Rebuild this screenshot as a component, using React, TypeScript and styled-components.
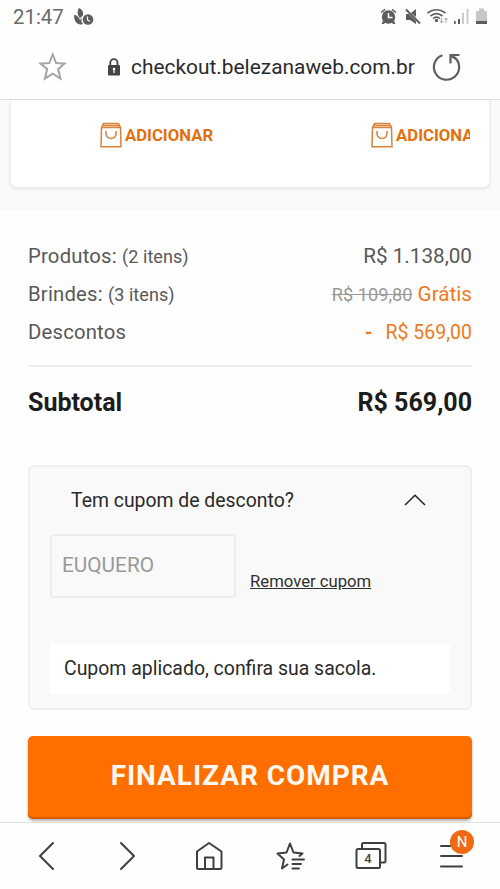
import React from "react";
import styled, { createGlobalStyle } from "styled-components";

const GlobalStyle = createGlobalStyle`
  * { box-sizing: border-box; }
  body { margin: 0; background: #fefefe; font-family: Roboto, sans-serif; }
  button { font: inherit; border: 0; background: none; padding: 0; color: inherit; display: block; }
  svg { display: block; flex: none; }
`;

const Screen = styled.div`
  width: 500px;
  height: 889px;
  display: flex;
  flex-direction: column;
  overflow: hidden;
  background: #fefefe;
  color: #222;

  > * { flex: none; }
`;

const StatusBar = styled.header`
  height: 34px;
  display: flex;
  align-items: center;
  padding: 0 12px 0 13px;
`;

const Clock = styled.time`
  font-size: 20.4px;
  line-height: 34px;
  color: #6a6a6a;
  flex: 1;
  display: flex;
  align-items: center;
  gap: 10px;
`;

const AddressBar = styled.div`
  height: 66px;
  display: flex;
  align-items: center;
  padding: 0 38px 0 38px;
  border-bottom: 1px solid #dedede;
`;

const Address = styled.div`
  display: flex;
  align-items: center;
  gap: 10px;
  margin: 0 auto 0 40px;
`;

const Url = styled.span`
  font-size: 20.9px;
  line-height: 30px;
  color: #2b2b2b;
  white-space: nowrap;
`;

const Shelf = styled.section`
  height: 110px;
  background: #fafafa;
  padding: 0 10px;
`;

const ShelfCard = styled.div`
  height: 88px;
  display: flex;
  padding: 21px 19px 0 89px;
  background: #fff;
  border: 1px solid #ececec;
  border-top: 0;
  border-radius: 0 0 6px 6px;
  box-shadow: 0 1px 3px rgba(0, 0, 0, 0.09);
  overflow: hidden;
`;

const AddTrack = styled.div`
  flex: 1;
  display: flex;
  gap: 158px;
  overflow: hidden;
`;

const AddButton = styled.button`
  height: 28px;
  display: flex;
  align-items: center;
  gap: 3px;
  flex: none;
  color: #e2700f;
  font-size: 16.7px;
  font-weight: 700;
`;

const Summary = styled.dl`
  margin: 0 28px;
  padding: 27px 0 14px;
  border-bottom: 2px solid #eeeeee;
`;

const SummaryRow = styled.div`
  height: 38px;
  display: flex;
  justify-content: space-between;
  align-items: baseline;
  line-height: 38px;
`;

const Label = styled.dt`
  font-size: 20.3px;
  letter-spacing: 0.2px;
  color: #585858;
`;

const Count = styled.span`
  font-size: 18px;
  letter-spacing: 0.05px;
`;

const Amount = styled.dd<{ $accent?: boolean }>`
  margin: 0;
  font-size: 20.7px;
  color: ${(p) => (p.$accent ? "#ec7a22" : "#585858")};
  white-space: pre;
`;

const DiscountAmount = styled(Amount)`
  display: flex;
  gap: 13px;
  font-size: 19.5px;
`;

const Minus = styled.span`
  font-weight: 700;
`;

const OldPrice = styled.s`
  font-size: 18.2px;
  color: #999;
`;

const Total = styled.div`
  height: 98px;
  margin: 0 28px;
  display: flex;
  justify-content: space-between;
  font-size: 25px;
  font-weight: 700;
  line-height: 72px;
  color: #1c1c1c;
`;

const Coupon = styled.section`
  height: 245px;
  margin: 0 28px;
  padding: 0 21px;
  background: #f9f9f9;
  border: 2px solid #efefef;
  border-radius: 6px;
`;

const CouponHeader = styled.div`
  height: 67px;
  display: flex;
  align-items: center;
  justify-content: space-between;
  padding: 0 23px 1px 20px;
  font-size: 19.4px;
  color: #2a2a2a;
`;

const CouponForm = styled.div`
  height: 64px;
  display: flex;
  align-items: flex-end;
  gap: 14px;
`;

const CodeField = styled.div`
  width: 186px;
  height: 64px;
  margin-left: -1px;
  padding-left: 10px;
  border: 2px solid #ededed;
  border-radius: 4px;
  font-size: 20.8px;
  line-height: 59px;
  color: #999;
`;

const RemoveLink = styled.a`
  font-size: 16.7px;
  line-height: 20px;
  margin-bottom: 6px;
  color: #303030;
  text-decoration: underline;
`;

const Notice = styled.p`
  height: 51px;
  margin: 45px -1px 0;
  padding-left: 14px;
  background: #fff;
  border-radius: 4px;
  font-size: 19.45px;
  line-height: 51px;
  color: #2a2a2a;
`;

const Checkout = styled.button`
  height: 83px;
  margin: 26px 28px 3px;
  padding-bottom: 3px;
  background: #ff6f00;
  border-radius: 5px;
  box-shadow: inset 0 -2px 0 #d75c00, 0 2px 3px rgba(0, 0, 0, 0.3);
  font-size: 28px;
  font-weight: 700;
  letter-spacing: 0.95px;
  line-height: 80px;
  text-align: center;
  color: #fff8f0;
`;

const BottomNav = styled.nav`
  height: 67px;
  display: grid;
  grid-template-columns: 80px 77px 81px 79px 84px 1fr;
  justify-items: start;
  align-content: start;
  padding: 18px 0 0 38px;
  background: #fefefe;
  border-top: 1px solid #e2e2e2;
  position: relative;
`;

const NavButton = styled.button`
  position: relative;
  height: 30px;
`;

const TabCount = styled.span`
  position: absolute;
  left: 1px;
  top: 9px;
  width: 24px;
  text-align: center;
  font-size: 13px;
  line-height: 17px;
  font-weight: 500;
  color: #444;
`;

const Badge = styled.span`
  position: absolute;
  left: 11px;
  top: -11px;
  width: 24px;
  height: 24px;
  border-radius: 50%;
  background: #f06a14;
  color: #fff;
  font-size: 15px;
  line-height: 24px;
  text-align: center;
`;

const LeafClockIcon = () => (
  <svg width="20" height="18" viewBox="0 0 20 18">
    <path d="M5 0C9 2 10 5 8.500 8L6 10C3 7 3 3 5 0ZM0 7C3 7 5 9 6 12L8 9C7 12 7 14 9 16C4 18 0 14 0 7Z" fill="#5e5e5e" />
    <circle cx="14" cy="11.500" r="5.300" fill="#5e5e5e" />
    <path d="M13.500 8.500V12L16 13.500" fill="none" stroke="#fff" strokeWidth="1.200" />
  </svg>
);

const StatusIcons = () => (
  <svg width="108" height="18" viewBox="0 0 108 18">
    <g fill="#5c5c5c">
      <circle cx="8.500" cy="9" r="6.700" />
      <path d="M3 13L1.500 16H4L5.500 14ZM14 13L15.500 16H13L11.500 14Z" />
      <path d="M1 4.500L5 1.300M12 1.300L16 4.500" stroke="#5c5c5c" strokeWidth="1.500" />
      <path d="M8.500 5V9.500H12.500" stroke="#fff" strokeWidth="1.500" fill="none" />
      <path d="M26 6H29L36 13V16L30 12H26ZM31 5L36 1V9Z" />
      <path d="M26 1.500L40 15.500" stroke="#5c5c5c" strokeWidth="2" />
      <circle cx="56.500" cy="12.500" r="1.700" />
      <path d="M47.500 5Q56.500 -1.500 65.500 5M50.500 8Q56.500 3.300 62.500 8M53 10.700Q56.500 7.500 60 10.700" fill="none" stroke="#5c5c5c" strokeWidth="1.600" />
      <path d="M74 13h1.700v3H74ZM78 11h2v5h-2Z" />
    </g>
    <path d="M61.500 10V15M59.800 13L61.500 15L63.200 13M66 15V10M64.300 12L66 10L67.700 12" fill="none" stroke="#aaa" />
    <path d="M82 5h2v11h-2ZM86.500 1h2v15h-2Z" fill="#ccc" />
    <path d="M96 3H99V0.500H104V3H107V16H96Z" fill="#c6c6c6" />
    <path d="M96 13H107V16H96Z" fill="#5c5c5c" />
  </svg>
);

const StarIcon = () => (
  <svg width="29" height="29" viewBox="0 0 29 29" fill="none" stroke="#a5a5a5" strokeWidth="2">
    <path d="M14.700 2.500L18.100 11L26.500 11.600L20.200 17.200L22.500 26.500L14.700 21.700L6.900 26.500L9.200 17.200L2.500 11.600L11.300 11Z" />
  </svg>
);

const LockIcon = () => (
  <svg width="14" height="18" viewBox="0 0 14 18">
    <path d="M3.300 8V4.800a3.600 3.600 0 0 1 7.200 0V8" fill="none" stroke="#444" strokeWidth="1.800" />
    <rect x="1" y="7" width="12" height="10.500" rx="1" fill="#444" />
    <circle cx="7" cy="11" r="1.300" fill="#fff" />
    <path d="M7 11V15" stroke="#fff" strokeWidth="1.200" />
  </svg>
);

const ReloadIcon = () => (
  <svg width="30" height="30" viewBox="0 0 30 30" fill="none" stroke="#606060" strokeWidth="2.200">
    <path d="M10.500 3.200A12.600 12.600 0 1 0 22 5" />
    <path d="M18.500 11.500V3H27.500M18.500 3.500L23.500 6.500" />
  </svg>
);

const BagIcon = () => (
  <svg width="22" height="26" viewBox="0 0 22 26" fill="none" stroke="#d9823b" strokeWidth="1.500">
    <path d="M1.500 5.500L3.500 1.500H18.500L20.500 5.500L21 24.700H1ZM1.500 5.500H20.500M3 3.500H19" />
    <path d="M6 9V11.500A5 5 0 0 0 16 11.500V9" />
  </svg>
);

const ChevronUp = () => (
  <svg width="22" height="12" viewBox="0 0 22 12" fill="none" stroke="#222" strokeWidth="1.500">
    <path d="M1 11L11 1.200L21 11" />
  </svg>
);

const NavSvg = styled.svg`
  fill: none;
  stroke: #3f3f3f;
  stroke-width: 2;
  stroke-linecap: round;
  stroke-linejoin: round;
`;

export default function App() {
  return (
    <Screen>
      <GlobalStyle />
      <StatusBar>
        <Clock>21:47<LeafClockIcon /></Clock>
        <StatusIcons />
      </StatusBar>
      <AddressBar>
        <StarIcon />
        <Address>
          <LockIcon />
          <Url>checkout.belezanaweb.com.br</Url>
        </Address>
        <ReloadIcon />
      </AddressBar>
      <Shelf>
        <ShelfCard>
          <AddTrack>
            <AddButton><BagIcon />ADICIONAR</AddButton>
            <AddButton><BagIcon />ADICIONAR</AddButton>
          </AddTrack>
        </ShelfCard>
      </Shelf>
      <Summary>
        <SummaryRow>
          <Label>Produtos: <Count>(2 itens)</Count></Label>
          <Amount>R$ 1.138,00</Amount>
        </SummaryRow>
        <SummaryRow>
          <Label>Brindes: <Count>(3 itens)</Count></Label>
          <Amount $accent><OldPrice>R$ 109,80</OldPrice> Grátis</Amount>
        </SummaryRow>
        <SummaryRow>
          <Label>Descontos</Label>
          <DiscountAmount $accent><Minus>-</Minus><span>R$ 569,00</span></DiscountAmount>
        </SummaryRow>
      </Summary>
      <Total><span>Subtotal</span><span>R$ 569,00</span></Total>
      <Coupon>
        <CouponHeader>Tem cupom de desconto?<ChevronUp /></CouponHeader>
        <CouponForm>
          <CodeField>EUQUERO</CodeField>
          <RemoveLink>Remover cupom</RemoveLink>
        </CouponForm>
        <Notice>Cupom aplicado, confira sua sacola.</Notice>
      </Coupon>
      <Checkout>FINALIZAR COMPRA</Checkout>
      <BottomNav>
        <NavButton>
          <NavSvg width="18" height="30" viewBox="0 0 18 30"><path d="M15 2L2 15L15 28" /></NavSvg>
        </NavButton>
        <NavButton>
          <NavSvg width="18" height="30" viewBox="0 0 18 30"><path d="M3 2L16 15L3 28" /></NavSvg>
        </NavButton>
        <NavButton>
          <NavSvg width="28" height="30" viewBox="0 0 28 30">
            <path d="M2 10.500L14 2L26.500 10.500V26.500Q26.500 28 25 28H3.500Q2 28 2 26.500ZM10 28V16.500H18.500V28" />
          </NavSvg>
        </NavButton>
        <NavButton>
          <NavSvg width="30" height="30" viewBox="0 0 30 30">
            <path d="M11.500 23.500L6 27.500L8 18.500L1.500 12.500L10.500 11.500L14 2.500L17.500 11.500L26.500 12.500L23.500 15" />
            <path d="M16.500 18.500H28M16.500 23H25M16.500 27.500H23" />
          </NavSvg>
        </NavButton>
        <NavButton>
          <NavSvg width="32" height="30" viewBox="0 0 32 30">
            <rect x="1.500" y="8" width="23.500" height="19" rx="1.500" />
            <path d="M7 8V3.500Q7 2 8.500 2H29Q30.500 2 30.500 3.500V20Q30.500 21.500 29 21.500H25" />
          </NavSvg>
          <TabCount>4</TabCount>
        </NavButton>
        <NavButton>
          <NavSvg width="26" height="30" viewBox="0 0 26 30"><path d="M2 5H23M2 15H23M2 25.500H23" /></NavSvg>
          <Badge>N</Badge>
        </NavButton>
      </BottomNav>
    </Screen>
  );
}
